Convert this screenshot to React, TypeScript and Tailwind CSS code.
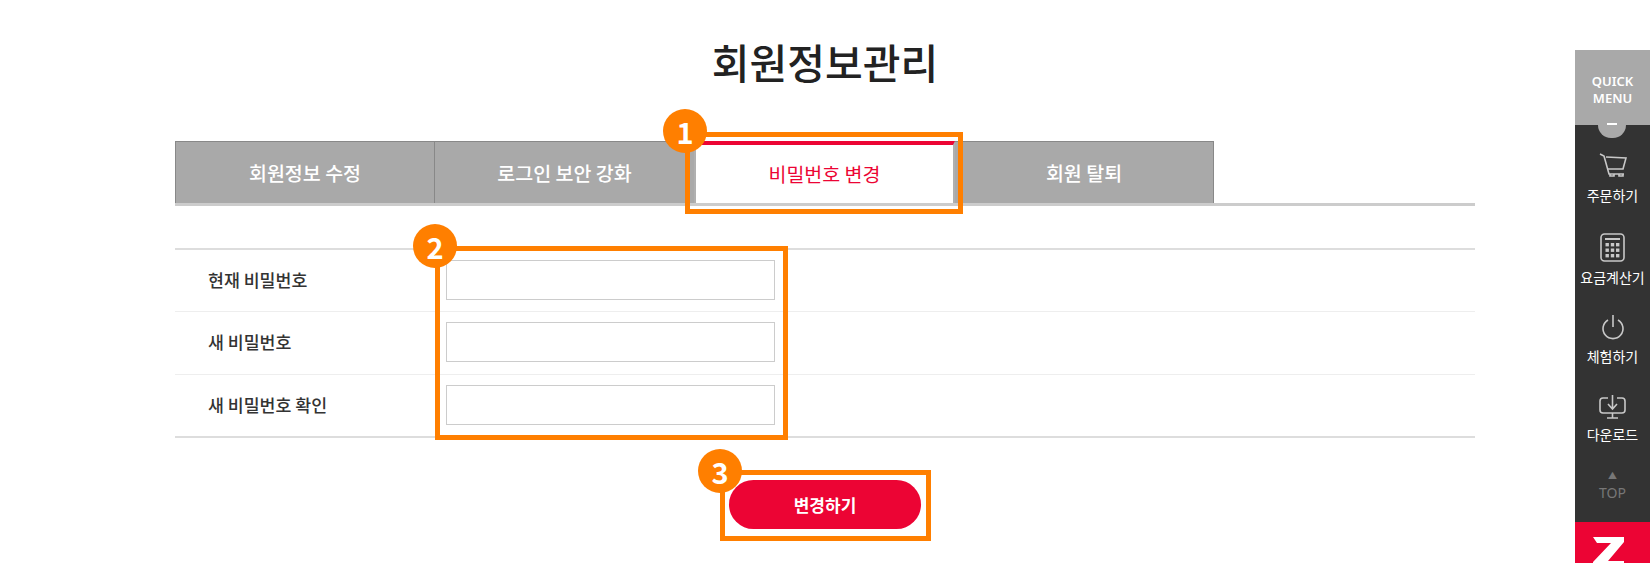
import React from "react";

function Badge({ n, className }: { n: string; className: string }) {
  return (
    <div className={`absolute z-20 flex h-[44px] w-[44px] items-center justify-center rounded-full bg-[#ff7f00] text-[29px] font-bold leading-none text-white ${className}`}>
      {n}
    </div>
  );
}

function Row({ label, className }: { label: string; className: string }) {
  return (
    <div className={`flex items-start pt-[10px] ${className}`}>
      <div className="flex h-[40px] w-[271px] items-center pl-[33px] text-[17.3px] font-medium text-[#333333]">{label}</div>
      <input type="password" className="h-[40px] w-[329px] border border-[#cccccc] bg-white outline-none" />
    </div>
  );
}

function QuickItem({ icon, label, className, labelClass }: { icon: React.ReactNode; label: string; className: string; labelClass: string }) {
  return (
    <div className={`flex flex-col items-center ${className}`}>
      <div className="flex h-[30px] items-center justify-center">{icon}</div>
      <div className={`text-[14px] leading-[18px] text-white ${labelClass}`}>{label}</div>
    </div>
  );
}

const stroke = { fill: "none", stroke: "#c8c8c8", strokeWidth: 1.6 };

export default function App() {
  return (
    <div className="relative h-[563px] w-[1650px] overflow-hidden bg-white font-['Noto_Sans_CJK_KR','Noto_Sans',sans-serif]">
      <div className="mx-auto w-[1300px]">
        <h1 className="pt-[34px] text-center text-[41px] font-medium leading-[54px] text-[#222222]">회원정보관리</h1>
        <div className="mt-[53px] flex h-[65px] border-b-[3px] border-[#cccccc]">
          <div className="flex w-[259px] items-center justify-center border-t border-l border-[#888888] bg-[#a9a9a9] text-[19.5px] font-medium text-white">회원정보 수정</div>
          <div className="flex w-[260px] items-center justify-center border-t border-l border-[#888888] bg-[#a9a9a9] text-[19.5px] font-medium text-white">로그인 보안 강화</div>
          <div className="flex w-[261px] items-center justify-center border-x-2 border-t-4 border-x-[#b0b0b0] border-t-[#ec0434] bg-white text-[19.5px] font-normal text-[#ec0434]">비밀번호 변경</div>
          <div className="flex w-[259px] items-center justify-center border-t border-r border-[#888888] bg-[#a9a9a9] text-[19.5px] font-medium text-white">회원 탈퇴</div>
        </div>
        <div className="mt-[42px] border-y-2 border-[#dddddd]">
          <Row label="현재 비밀번호" className="h-[62px] border-b border-[#eeeeee]" />
          <Row label="새 비밀번호" className="h-[63px] border-b border-[#eeeeee]" />
          <Row label="새 비밀번호 확인" className="h-[61px]" />
        </div>
        <div className="mt-[42px] flex justify-center">
          <button className="h-[49px] w-[192px] rounded-full bg-[#ec0434] text-[17px] font-bold text-white">변경하기</button>
        </div>
      </div>

      {/* annotations */}
      <div className="absolute left-[685px] top-[132px] z-10 h-[82px] w-[278px] border-[5px] border-[#ff7f00]" />
      <Badge n="1" className="left-[663px] top-[109px]" />
      <div className="absolute left-[435px] top-[246px] z-10 h-[194px] w-[353px] border-[5px] border-[#ff7f00]" />
      <Badge n="2" className="left-[413px] top-[224px]" />
      <div className="absolute left-[720px] top-[470px] z-10 h-[71px] w-[211px] border-[5px] border-[#ff7f00]" />
      <Badge n="3" className="left-[698px] top-[449px]" />

      {/* quick menu */}
      <div className="absolute left-[1575px] top-[50px] flex h-[513px] w-[75px] flex-col">
        <div className="relative h-[75px] shrink-0 bg-[#a9a9a9] pt-[23px] text-center font-['Noto_Sans',sans-serif] text-[13px] font-semibold leading-[17px] text-white">
          QUICK<br />MENU
          <div className="absolute left-[23px] top-[75px] z-10 h-[13px] w-[28px] rounded-b-full bg-[#a9a9a9]" />
          <div className="absolute left-[32px] top-[73px] z-20 h-[2px] w-[10px] bg-white" />
        </div>
        <div className="flex h-[397px] shrink-0 flex-col items-center bg-[#333333] pt-[25px]">
          <QuickItem className="h-[82px]" labelClass="mt-[6px]" label="주문하기" icon={
            <svg width="28" height="24" viewBox="0 0 28 24" {...stroke}><path d="M1 1l4 2 5 18h15" /><path d="M7 4l20 1-3 11H9" /><path d="M11 21v2h4v-2M20 21v2h4v-2" /></svg>
          } />
          <QuickItem className="h-[80px]" labelClass="mt-[6px]" label="요금계산기" icon={
            <svg width="25" height="29" viewBox="0 0 25 29" {...stroke}><rect x="1" y="1" width="23" height="27" rx="3.5" /><path d="M5 6h15" strokeWidth="2" /><g fill="#c8c8c8" stroke="none"><rect x="5.5" y="10" width="3.4" height="3.4" /><rect x="10.8" y="10" width="3.4" height="3.4" /><rect x="16" y="10" width="3.4" height="3.4" /><rect x="5.5" y="15.5" width="3.4" height="3.4" /><rect x="10.8" y="15.5" width="3.4" height="3.4" /><rect x="16" y="15.5" width="3.4" height="3.4" /><rect x="5.5" y="21" width="3.4" height="3.4" /><rect x="10.8" y="21" width="3.4" height="3.4" /><rect x="16" y="21" width="3.4" height="3.4" /></g></svg>
          } />
          <QuickItem className="h-[80px]" labelClass="mt-[5px]" label="체험하기" icon={
            <svg width="24" height="26" viewBox="0 0 24 26" {...stroke}><path d="M7 6a10 10 0 1 0 10 0" /><path d="M12 1v12" /></svg>
          } />
          <QuickItem className="h-[79px]" labelClass="mt-[3px]" label="다운로드" icon={
            <svg width="27" height="24" viewBox="0 0 27 24" {...stroke}><path d="M9 3H4a3 3 0 0 0-3 3v9a3 3 0 0 0 3 3h19a3 3 0 0 0 3-3V6a3 3 0 0 0-3-3h-5" /><path d="M13.5 0v13M9 9l4.5 5L18 9" /><path d="M13.5 18v5M8 23h11" /></svg>
          } />
          <div className="text-[9px] leading-[10px] text-[#777777]">▲</div>
          <div className="mt-[2px] font-['Noto_Sans',sans-serif] text-[14px] leading-[20px] text-[#777777]">TOP</div>
        </div>
        <div className="relative flex-1 overflow-hidden bg-[#ec0434]">
          <svg className="absolute left-[18px] top-[15px]" width="32" height="34" viewBox="0 0 32 34"><path d="M0 0h31v5L15 24h16v6H0v-5L18 6H4z" fill="#fff" /></svg>
        </div>
      </div>
    </div>
  );
}
